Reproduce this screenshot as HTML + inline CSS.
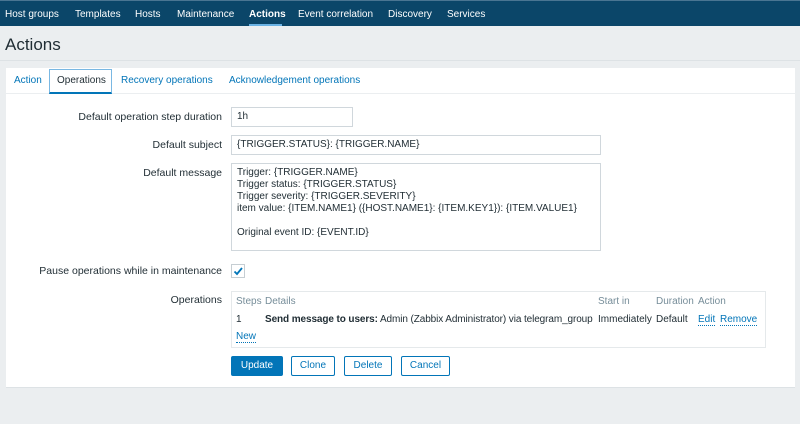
<!DOCTYPE html>
<html><head><style>
*{margin:0;padding:0;box-sizing:border-box}
body{width:800px;height:424px;background:#ebeef0;font-family:"Liberation Sans",Arial,sans-serif;font-size:10px;color:#1f2c33;position:relative;overflow:hidden}
.a{position:absolute;white-space:nowrap}
.nav{left:0;top:0;width:800px;height:26px;background:#0b4669;border-top:1px solid #4a7592}
.nav span{position:absolute;top:8px;color:#fff;font-size:10px}
.lbl{right:578px;text-align:right;font-size:10.5px}
.in{background:#fff;border:1px solid #d0d7dc;padding:0 5px}
.btn{border:1px solid #0275b8;color:#0275b8;background:#fff;height:20px;line-height:18px;text-align:center;border-radius:2px}
.lnk{color:#0275b8;border-bottom:1px dotted #0275b8}
</style></head><body>
<div class="a nav">
<span style="left:5px">Host groups</span><span style="left:75px">Templates</span><span style="left:135px">Hosts</span><span style="left:177px">Maintenance</span><span style="left:249px;font-weight:bold">Actions</span><span style="left:298px">Event correlation</span><span style="left:388px">Discovery</span><span style="left:447px">Services</span>
<div class="a" style="left:249px;top:23px;width:33px;height:2px;background:#6ab2e4"></div>
</div>
<div class="a" style="left:5px;top:35px;font-size:17px;color:#1f2c33">Actions</div>
<div class="a" style="left:0;top:60px;width:800px;height:1px;background:#dde2e5"></div>
<div class="a" style="left:6px;top:68px;width:789px;height:320px;background:#fff;border-bottom:1px solid #dde2e5"></div>
<div class="a" style="left:6px;top:93px;width:789px;height:1px;background:#ebeef0"></div>
<div class="a" style="left:14px;top:75px;color:#0275b8">Action</div>
<div class="a" style="left:49px;top:69px;width:63px;height:25px;border:1px solid #7ab8e3;border-bottom:2px solid #0275b8;background:#fff"></div>
<div class="a" style="left:57px;top:75px">Operations</div>
<div class="a" style="left:121px;top:75px;color:#0275b8">Recovery operations</div>
<div class="a" style="left:229px;top:75px;color:#0275b8">Acknowledgement operations</div>

<div class="a lbl" style="top:111px">Default operation step duration</div>
<div class="a in" style="left:231px;top:107px;width:122px;height:20px;line-height:18px">1h</div>
<div class="a lbl" style="top:139px">Default subject</div>
<div class="a in" style="left:231px;top:135px;width:370px;height:20px;line-height:18px">{TRIGGER.STATUS}: {TRIGGER.NAME}</div>
<div class="a lbl" style="top:167px">Default message</div>
<div class="a in" style="left:231px;top:163px;width:370px;height:88px;line-height:12px;padding-top:3px;white-space:pre">Trigger: {TRIGGER.NAME}
Trigger status: {TRIGGER.STATUS}
Trigger severity: {TRIGGER.SEVERITY}
item value: {ITEM.NAME1} ({HOST.NAME1}: {ITEM.KEY1}): {ITEM.VALUE1}

Original event ID: {EVENT.ID}</div>
<div class="a lbl" style="top:265px">Pause operations while in maintenance</div>
<div class="a" style="left:231px;top:264px;width:14px;height:14px;border:1px solid #c6ced3;background:#fff"><svg width="12" height="12" style="position:absolute;left:0;top:0"><path d="M2.5 6.5L5 9L10 3" stroke="#0275b8" stroke-width="1.8" fill="none"/></svg></div>
<div class="a lbl" style="top:294px">Operations</div>
<div class="a" style="left:231px;top:291px;width:535px;height:57px;border:1px solid #e5e9eb"></div>
<div class="a" style="left:236px;top:296px;color:#768d99">Steps</div>
<div class="a" style="left:265px;top:296px;color:#768d99">Details</div>
<div class="a" style="left:598px;top:296px;color:#768d99">Start in</div>
<div class="a" style="left:656px;top:296px;color:#768d99">Duration</div>
<div class="a" style="left:698px;top:296px;color:#768d99">Action</div>
<div class="a" style="left:236px;top:314px">1</div>
<div class="a" style="left:265px;top:314px;letter-spacing:-0.1px"><b>Send message to users:</b> Admin (Zabbix Administrator) via telegram_group</div>
<div class="a" style="left:598px;top:314px">Immediately</div>
<div class="a" style="left:656px;top:314px">Default</div>
<div class="a lnk" style="left:698px;top:314px">Edit</div>
<div class="a lnk" style="left:720px;top:314px">Remove</div>
<div class="a lnk" style="left:236px;top:331px">New</div>
<div class="a btn" style="left:231px;top:356px;width:52px;background:#0275b8;color:#fff">Update</div>
<div class="a btn" style="left:291px;top:356px;width:44px">Clone</div>
<div class="a btn" style="left:344px;top:356px;width:48px">Delete</div>
<div class="a btn" style="left:401px;top:356px;width:49px">Cancel</div>
</body></html>
